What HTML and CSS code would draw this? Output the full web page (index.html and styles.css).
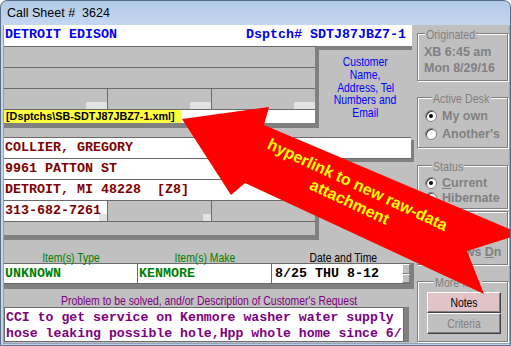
FILE: index.html
```html
<!DOCTYPE html>
<html>
<head>
<meta charset="utf-8">
<title>Call Sheet</title>
<link rel="stylesheet" href="styles.css">
</head>
<body>
<div class="window">
  <div class="titlebar">Call Sheet #&nbsp; 3624</div>
  <div class="client">
    <div class="main">
      <div class="topfield"><span class="blue">DETROIT EDISON</span><span class="blue">Dsptch# SDTJ87JBZ7-1</span></div>
      <div class="sec-a">
        <div class="blk-a">
          <div class="grow"></div>
          <div class="grow"></div>
          <div class="cells">
            <div class="cell"><i class="sq"></i></div>
            <div class="cell"><i class="sq"></i></div>
            <div class="cell"><i class="sq"></i></div>
          </div>
          <div class="linkrow"><span class="link">[Dsptchs\SB-SDTJ87JBZ7-1.xml]</span></div>
        </div>
        <div class="custpanel">
          <p class="nar">Customer</p>
          <p class="nar">Name,</p>
          <p class="nar">Address, Tel</p>
          <p class="nar">Numbers and</p>
          <p class="nar">Email</p>
        </div>
      </div>
      <div class="sec-b">
        <div class="row wide red">COLLIER, GREGORY</div>
        <div class="blk-b">
          <div class="row red">9961 PATTON ST</div>
          <div class="row red">DETROIT, MI 48228&nbsp; [Z8]</div>
          <div class="cells phone">
            <div class="cell white red">313-682-7261<i class="sq sm"></i></div>
            <div class="cell"><i class="sq sm"></i></div>
            <div class="cell"></div>
          </div>
          <div class="grow3"></div>
        </div>
      </div>
      <div class="labels">
        <div class="lab l1"><span class="nar">Item(s) Type</span></div>
        <div class="lab l2"><span class="nar">Item(s) Make</span></div>
        <div class="lab l3"><span class="nar">Date and Time</span></div>
      </div>
      <div class="fields">
        <div class="fld f1 green">UNKNOWN</div>
        <div class="fld f2 green">KENMORE</div>
        <div class="fld f3">8/25 THU 8-12</div>
        <div class="spin"><i></i><i></i></div>
      </div>
      <div class="problabel"><span class="nar">Problem to be solved, and/or Description of Customer's Request</span></div>
      <div class="textbox">CCI to get service on Kenmore washer water supply<br>hose leaking possible hole,Hpp whole home since 6/</div>
    </div>
    <div class="side">
      <fieldset class="grp g-orig">
        <legend class="lg-orig"><span class="nar">Originated:</span></legend>
        <p class="bold">XB 6:45 am</p>
        <p class="bold">Mon 8/29/16</p>
      </fieldset>
      <fieldset class="grp g-desk">
        <legend class="lg-desk"><span class="nar">Active Desk</span></legend>
        <div class="radio r18"><i class="rb on"></i><span>My own</span></div>
        <div class="radio r18"><i class="rb"></i><span>Another's</span></div>
      </fieldset>
      <fieldset class="grp g-status">
        <legend class="lg-status"><span class="nar">Status</span></legend>
        <div class="radio"><i class="rb on"></i><span><u>C</u>urrent</span></div>
        <div class="radio"><i class="rb"></i><span>Hibernate</span></div>
      </fieldset>
      <fieldset class="grp g-rows">
        <p class="bold">Rows Up</p>
        <p class="bold">Rows <u>D</u>n</p>
      </fieldset>
      <fieldset class="grp g-more">
        <legend class="lg-more"><span class="nar">More Info</span></legend>
        <button class="btn notes"><span class="nar">Notes</span></button>
        <button class="btn crit"><span class="nar">Criteria</span></button>
      </fieldset>
    </div>
  </div>
  <svg class="arrow" width="511" height="346" viewBox="0 0 511 346">
    <polygon points="181,118 268,106 263,124 520,233 466,250 483,293 244,182 230,194" fill="#ff0000"/>
    <g transform="translate(356,185) rotate(25)" fill="#ffff00" font-family="Liberation Sans, Arial, sans-serif" font-weight="bold" font-size="16">
      <text x="0" y="4" text-anchor="middle">hyperlink to new raw-data</text>
      <text x="0" y="23" text-anchor="middle">attachment</text>
    </g>
  </svg>
</div>
</body>
</html>
```

FILE: styles.css
```css
* { box-sizing: border-box; margin: 0; padding: 0; }
html, body { width: 511px; height: 346px; overflow: hidden; background: #fff; }
body { font-family: "Liberation Sans", Arial, sans-serif; }

.window {
  position: relative;
  width: 511px; height: 346px;
  border: 1px solid #5d6f86;
  border-radius: 7px 7px 0 0;
  background: linear-gradient(180deg, #b3cae6 0, #c3d7ef 24px, #bfd4ed 100%);
  display: flex; flex-direction: column;
  overflow: hidden;
}
.titlebar {
  height: 24px; flex: none;
  padding: 4px 0 0 6px;
  font-size: 12.5px; line-height: 16px; color: #000;
}
.client {
  display: flex;
  margin: 0 0 1px 2px;
  width: 507px; height: 319px;
  border: 1px solid #8fa3bb; border-top: 0;
  background: #c0c0c0;
}
.main { width: 410px; display: flex; flex-direction: column; }
.side { width: 95px; padding: 2px 1px 0 3px; display: flex; flex-direction: column; }

/* narrow sans (Arial Narrow look) */
.nar {
  display: inline-block;
  font-family: "Liberation Sans", Arial, sans-serif;
  font-size: 13px;
  transform: scaleX(0.8);
  white-space: nowrap;
}

.blue, .red, .green, .fld, .textbox {
  font-family: "Liberation Mono", monospace; font-weight: bold; font-size: 13.33px;
}
.blue { color: #0000f0; }
.red { color: #800000; }
.green { color: #008000; }

.topfield {
  height: 21px; width: 408px; flex: none;
  background: #fff;
  display: flex; justify-content: space-between;
  padding: 0 6px 0 1px; line-height: 19px;
}

.sec-a { height: 91px; display: flex; flex: none; }
.blk-a {
  width: 315px; height: 82px;
  border-top: 1px solid #6a6a6a;
  border-right: 4px solid #808080;
  border-bottom: 5px solid #808080;
  display: flex; flex-direction: column;
}
.grow { height: 21px; border-bottom: 1px solid #6a6a6a; }
.cells { height: 21px; display: flex; border-bottom: 1px solid #6a6a6a; }
.cell { position: relative; width: 104px; border-right: 1px solid #6a6a6a; }
.cell:last-child { flex: 1; border-right: 0; }
.sq { position: absolute; right: 0; bottom: 0; width: 21px; height: 7px; background: #e2e2e2; }
.sq.sm { width: 8px; height: 7px; }
.linkrow { height: 13px; background: #fff; display: flex; }
.link {
  background: #ffff40; color: #000;
  font-family: "Liberation Sans", Arial, sans-serif; font-weight: bold; font-size: 10.8px;
  line-height: 13px; padding: 0 6px 0 2px;
}
.custpanel {
  width: 93px; margin-right: 2px;
  border-top: 4px solid #808080;
  display: flex; flex-direction: column; align-items: center;
  padding-top: 5px;
  color: #0000ff;
}
.custpanel p { height: 12.8px; line-height: 13px; }

.sec-b { height: 103px; flex: none; display: flex; flex-direction: column; }
.row {
  height: 21px; background: #fff;
  border-bottom: 1px solid #6a6a6a;
  padding-left: 1px; line-height: 20px;
}
.row.wide { width: 407px; height: 22px; border-top: 1px solid #6a6a6a; box-shadow: 3px 3px 0 #808080; }
.blk-b {
  width: 315px; height: 81px;
  border-right: 4px solid #808080;
  border-bottom: 5px solid #808080;
  display: flex; flex-direction: column;
  position: relative;
}
.phone .cell { height: 20px; }
.cell.white { background: #fff; padding-left: 1px; line-height: 20px; }
.grow3 { flex: 1; }

.labels { height: 23px; flex: none; display: flex; }
.lab { text-align: center; padding-top: 9px; line-height: 15px; }
.lab .nar { line-height: 15px; }
.l1 { width: 134px; color: #008000; }
.l2 { width: 134px; color: #008000; }
.l3 { width: 142px; color: #000; }

.fields {
  height: 26px; width: 410px; flex: none;
  display: flex;
  border-right: 4px solid #808080;
  border-bottom: 5px solid #808080;
}
.fld {
  height: 21px; background: #fff;
  border-top: 1px solid #6a6a6a; border-bottom: 1px solid #6a6a6a;
  line-height: 19px; padding-left: 1px;
}
.f1 { width: 133px; }
.f2 { width: 134px; border-left: 1px solid #6a6a6a; }
.f3 { width: 131px; border-left: 1px solid #6a6a6a; color: #000; padding-left: 3px; }
.spin { width: 8px; height: 21px; display: flex; flex-direction: column; border-top: 1px solid #6a6a6a; border-bottom: 1px solid #6a6a6a; background: #c0c0c0; }
.spin i { flex: 1; border: 1px solid; border-color: #fff #808080 #808080 #fff; }

.problabel {
  height: 18px; flex: none; text-align: center;
  color: #800080; padding-top: 3px; line-height: 15px;
}
.problabel .nar { line-height: 15px; }
.textbox {
  height: 35px; width: 400px; flex: none;
  background: #fff; color: #800080;
  border: 1px solid #6a6a6a;
  box-shadow: 5px 0 0 #808080;
  font-size: 13.2px;
  line-height: 15.5px; padding: 2px 0 0 1px;
  white-space: nowrap; overflow: hidden;
}

.grp {
  border: 1px solid #808080;
  box-shadow: inset 1px 1px 0 #fff, 1px 1px 0 #fff;
  width: 91px;
  padding: 0;
  flex: none;
}
.grp legend {
  margin-left: 7px; padding: 0 1px;
  background: #c0c0c0;
  color: #808080;
  height: 13px; line-height: 13px;
  overflow: visible;
}
.grp legend .nar { transform-origin: 0 50%; transform: scaleX(0.82); line-height: 13px; }
.lg-orig { width: 52px; }
.lg-desk { width: 59px; }
.lg-status { width: 32px; }
.lg-more { width: 48px; }

.bold { font-weight: bold; font-size: 12.5px; color: #808080; line-height: 15.5px; padding-left: 6px; }
.g-orig { height: 54px; padding-top: 5px; }
.g-desk { height: 57px; margin-top: 10px; padding: 3px 0 0 7px; }
.g-status { height: 50px; margin-top: 11px; padding: 3px 0 0 7px; }
.g-rows { height: 54px; margin-top: 2px; padding: 15px 0 0 24px; }
.g-rows .bold { line-height: 17px; }
.g-more { height: 67px; margin-top: 10px; padding: 4px 0 0 9px; }

.radio { display: flex; align-items: center; height: 15px; gap: 5px; }
.radio.r18 { height: 18px; }
.radio span { font-weight: bold; font-size: 12.5px; color: #808080; }
.rb {
  width: 12px; height: 12px; border-radius: 50%;
  background: #fff; border: 1px solid #808080;
  box-shadow: inset 1px 1px 0 #404040;
  display: flex; align-items: center; justify-content: center;
  flex: none;
}
.rb.on::after { content: ""; width: 4px; height: 4px; border-radius: 50%; background: #000; }

.btn {
  display: block; width: 74px; height: 21px;
  border: 1px solid; border-color: #fff #404040 #404040 #fff;
  box-shadow: inset -1px -1px 0 #808080;
  text-align: center;
}
.btn .nar { line-height: 17px; }
.notes { background: #e0c4c8; color: #000; }
.crit { background: #c0c0c0; color: #808080; }

.arrow { position: absolute; left: 0; top: 0; pointer-events: none; }
```
